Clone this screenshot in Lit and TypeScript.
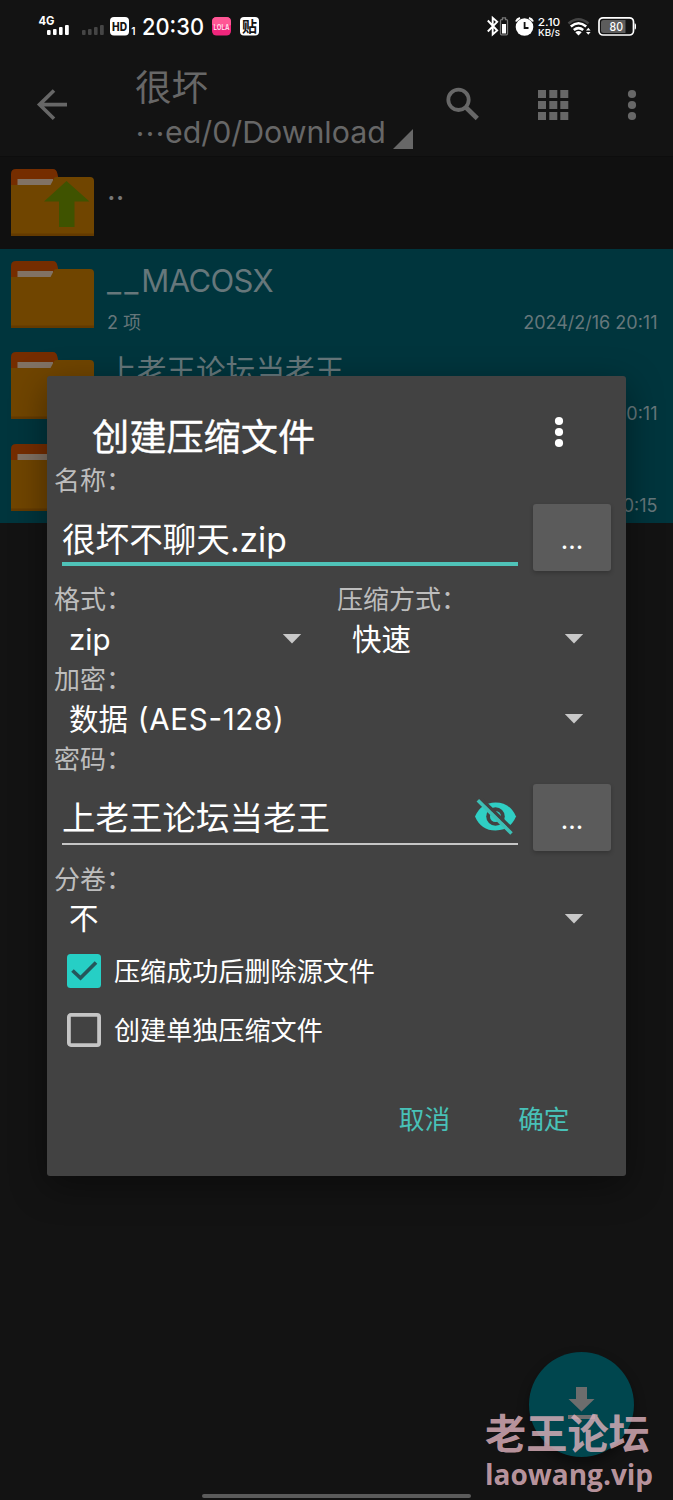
import { LitElement, html, css, svg } from "lit";
import { customElement, property } from "lit/decorators.js";

const kebab = html`<svg class="kebab" width="10" height="32" viewBox="0 0 10 32" fill="currentColor">
  <circle cx="5" cy="5" r="4.1"/><circle cx="5" cy="16" r="4.1"/><circle cx="5" cy="27" r="4.1"/></svg>`;

const caret = html`<svg class="caret" width="20" height="10" viewBox="0 0 20 10"><path d="M.8 0H19.2L10 9.6Z" fill="#c8c8c8"/></svg>`;

const label = (text: string) => html`<div class="label">${text}：</div>`;

@customElement("folder-icon")
export class FolderIcon extends LitElement {
  @property({ type: Boolean }) up = false;
  static styles = css`:host { display: block; width: 84px; height: 68px; flex: none; } svg { display: block; }`;
  render() {
    return html`<svg width="84" height="68" viewBox="0 0 84 68">
      <path d="M0 20V5Q0 0 5 0H42Q45.500 0 46.500 5L48 12V20Z" fill="#752d00"/>
      <path d="M6.500 10H42V16H6.500Z" fill="#817264"/>
      <path d="M0 16H39.500L43.500 8.500Q44 8 46 8H79Q83 8 83 12V67H0Z" fill="#704500"/>
      <path d="M0 64.500H83V67H0Z" fill="#633a00"/>
      ${this.up ? svg`<path d="M55.500 12L78.500 32.500H63.500V58H48V32.500H33Z" fill="#3f5300"/>` : ""}
    </svg>`;
  }
}

@customElement("file-row")
export class FileRow extends LitElement {
  @property() name = "";
  @property() count = "";
  @property() date = "";
  static styles = css`
    :host { display: flex; height: 91.500px; box-sizing: border-box; padding: 12px 15.500px 0 11px; background: #00353d; color: #66777b; }
    .body { flex: 1; margin-left: 12px; display: flex; flex-direction: column; }
    .name { flex: none; height: 40px; line-height: 40px; font-size: 31px; letter-spacing: -.6px; white-space: nowrap; }
    .lead { letter-spacing: 3px; }
    :host([cjk]) .name { font-size: 29.700px; line-height: 37px; letter-spacing: 0; }
    .meta { flex: none; display: flex; justify-content: space-between; height: 39px; line-height: 44px; font-size: 18px; }
  `;
  render() {
    const lead = this.name.match(/^_*/)![0];
    return html`<folder-icon></folder-icon>
      <div class="body"><div class="name"><span class="lead">${lead}</span>${this.name.slice(lead.length)}</div>
      <div class="meta"><span>${this.count}</span><span>${this.date}</span></div></div>`;
  }
}

@customElement("app-root")
export class AppRoot extends LitElement {
  static styles = css`
    :host { display: block; position: relative; width: 673px; height: 1500px; overflow: hidden; background: #131313;
      font-family: Inter, "Noto Sans CJK SC", sans-serif; color: #fff; }
    * { box-sizing: border-box; }
    svg { display: block; flex: none; }
    .status { height: 53px; }
    .header { height: 103px; display: flex; align-items: flex-start; color: #676767; padding-left: 36px; }
    .back { margin-top: 36px; }
    .path { width: 280px; margin-left: 67px; padding-top: 10px; }
    .path .t { font-size: 36.500px; height: 48px; line-height: 50px; margin-left: -1px; }
    .path .s { display: flex; font-size: 30.300px; height: 42px; line-height: 42px; white-space: nowrap; }
    .path .dots { font-family: "Noto Sans CJK SC", sans-serif; font-size: 30px; width: 28px; margin-left: -1px; line-height: 42px; margin-right: 2px; }
    .corner { margin: 18px 0 0 7px; }
    .search { margin: 34px 0 0 30px; }
    .grid { margin: 36px 0 0 57px; }
    .header .kebab { margin: 36px 0 0 58px; }
    .list { background: #101010; border-top: 1px solid #0d0d0d; }
    .parent { height: 91.500px; display: flex; padding: 12px 0 0 11px; color: #777; }
    .parent span { margin-left: 12px; font-size: 30px; line-height: 41px; }

    .dialog { position: absolute; left: 47px; top: 376px; width: 579px; height: 800px; background: #424242; border-radius: 3px;
      box-shadow: 0 10px 36px rgba(0,0,0,.4); padding-top: 34px; }
    .title { height: 54px; display: flex; padding-left: 45px; }
    .title span { width: 462px; font-size: 37.200px; line-height: 56px; -webkit-text-stroke: .35px #fff; }
    .title .kebab { margin-top: 6px; }
    .label { height: 32px; line-height: 34px; font-size: 26px; color: #bdbdbd; padding-left: 7px; white-space: nowrap; }
    .field { display: flex; height: 88px; padding: 8px 0 0 15px; }
    .name-field { height: 87px; }
    .edit { width: 456px; height: 62px; display: flex; justify-content: space-between; font-size: 33.600px; line-height: 71px;
      border-bottom: 4px solid #4fc3b8; white-space: nowrap; }
    .edit.thin { height: 61.500px; border-bottom: 2px solid #c6c6c6; font-size: 33.500px; line-height: 69px; }
    .eye { margin-top: 14.500px; }
    .more { width: 78px; height: 67px; margin-left: 15px; border-radius: 3px; background: #5b5b5b; box-shadow: 0 2px 4px rgba(0,0,0,.22);
      font-size: 26px; line-height: 71px; text-align: center; }
    .pair { display: grid; grid-template-columns: 283px 1fr; }
    .spin { height: 48px; display: flex; justify-content: space-between; padding: 0 42px 0 22px; font-size: 29.500px; line-height: 49px; }
    .spin.first { padding-right: 28px; }
    .spin .caret { margin-top: 18.500px; }
    .latin { letter-spacing: .7px; font-feature-settings: "case"; margin-left: 1.500px; }
    .pw { padding-top: 8.500px; }
    .spin.split { height: 45px; line-height: 46px; }
    .check { height: 60px; display: flex; align-items: center; padding-left: 20px; font-size: 26.100px; }
    .check svg { margin-top: 1px; }
    .check + .check { height: 59px; }
    .check span { margin-left: 13px; line-height: 60px; padding-top: 3px; }
    .actions { display: flex; justify-content: flex-end; gap: 68px; padding-right: 56.500px; font-size: 25.700px; line-height: 122px; color: #48c1b8; }

    .fab { position: absolute; left: 529px; top: 1352px; width: 105px; height: 105px; border-radius: 50%; background: #00464e;
      box-shadow: 0 6px 12px rgba(0,0,0,.4); padding: 35px 0 0 39px; }
    .mark { position: absolute; left: 485px; top: 1407px; color: rgba(220,176,187,.84); white-space: nowrap; font-weight: 700; }
    .mark .zh { font-family: "Noto Sans CJK SC", sans-serif; font-size: 41.200px; height: 52px; line-height: 49px; }
    .mark .en { font-family: "Open Sans", "Noto Sans", sans-serif; font-size: 28px; height: 32px; line-height: 30px; }
    .pill { position: absolute; left: 202px; top: 1494px; width: 269px; height: 4px; border-radius: 2px; background: #5b5b5b; }
  `;

  statusBar() {
    return html`<svg class="status" width="673" height="53" viewBox="0 0 673 53" fill="#fff" font-family="Inter, 'Noto Sans CJK SC', sans-serif">
      <text x="38.500" y="25" font-size="12" font-weight="700" textLength="16" lengthAdjust="spacingAndGlyphs">4G</text>
      <g><rect x="47" y="30" width="3.600" height="5" rx="1"/><rect x="53" y="29" width="3.600" height="6" rx="1"/><rect x="59" y="27" width="3.600" height="8" rx="1"/><rect x="65" y="25" width="3.800" height="10" rx="1"/></g>
      <g fill="#454545"><rect x="82" y="30" width="3.600" height="5" rx="1"/><rect x="88" y="29" width="3.600" height="6" rx="1"/><rect x="94" y="27" width="3.600" height="8" rx="1"/><rect x="100" y="25" width="3.800" height="10" rx="1"/></g>
      <rect x="110" y="17" width="19" height="18.500" rx="4"/>
      <text x="112" y="30.800" font-size="11.500" font-weight="800" fill="#131313" textLength="15" lengthAdjust="spacingAndGlyphs">HD</text>
      <text x="131.300" y="35" font-size="10" font-weight="600">1</text>
      <text x="142" y="34.700" font-size="23.500" font-weight="500" textLength="62" lengthAdjust="spacingAndGlyphs">20:30</text>
      <rect x="212" y="17" width="19" height="18.500" rx="4.500" fill="#f0267c"/>
      <path d="M212 22Q212 17 217 17H226Q231 17 231 22V25Q222 29 212 25Z" fill="#ff5795"/>
      <text x="213.600" y="29.500" font-size="7.500" font-weight="700" fill="#ffd5e4" textLength="16" lengthAdjust="spacingAndGlyphs">LOLA</text>
      <rect x="240" y="17" width="19" height="18.500" rx="4"/>
      <text x="242" y="31.700" font-size="15" font-weight="700" fill="#131313">贴</text>
      <path d="M487.800 20.500L497.200 30.500L492.700 34.500V17.800L497.200 21.800L487.800 31.500" fill="none" stroke="#fff" stroke-width="1.900"/>
      <path d="M502.500 17.800h3v1.800h1q1 0 1 1V33.600q0 1.200-1 1.200h-5q-1 0-1-1.200V20.600q0-1 1-1h1z" fill="#131313" stroke="#777" stroke-width="1.300"/>
      <rect x="502" y="24" width="4" height="9.500"/>
      <circle cx="524.500" cy="27" r="8.800"/><path d="M516 21.500Q517 19 520 18M533 21.500Q532 19 529 18" fill="none" stroke="#fff" stroke-width="2"/>
      <path d="M524.600 22V28H528.500" fill="none" stroke="#131313" stroke-width="1.800"/>
      <text x="537.800" y="25.500" font-size="11" font-weight="500" textLength="22.500" lengthAdjust="spacingAndGlyphs">2.10</text>
      <text x="538" y="35.500" font-size="9.500" font-weight="500" textLength="22" lengthAdjust="spacingAndGlyphs">KB/s</text>
      <g fill="none" stroke-width="2.600"><path d="M568.500 23.500Q578.500 15 588.500 23.500" stroke="#454545"/><path d="M570.800 26.500Q578.500 20 586.200 26.500" stroke="#fff"/><path d="M573.800 30Q578.500 26.300 583.200 30" stroke="#fff"/></g>
      <path d="M575.300 32.200Q578.500 30 581.700 32.200L578.500 35.500Z"/><path d="M586 30.500L588.300 27.700L590.600 30.500ZM586 32L588.300 34.800L590.600 32Z"/>
      <rect x="599" y="17.800" width="34.500" height="17.200" rx="4" fill="none" stroke="#fff" stroke-width="1.700"/>
      <path d="M603.500 20H625.500V33H603.500Q601 33 601 30.500V22.500Q601 20 603.500 20Z" fill="#5c5c5c"/>
      <path d="M634.600 23.200Q636 23.200 636 25V28Q636 29.500 634.600 29.500Z"/>
      <text x="609.500" y="30.600" font-size="11.500" font-weight="500" textLength="13.500" lengthAdjust="spacingAndGlyphs">80</text>
    </svg>`;
  }

  render() {
    return html`
      ${this.statusBar()}
      <div class="header">
        <svg class="back" width="33" height="32" viewBox="0 0 33 32"><path d="M31 15.600H4M18 1.500L3.500 15.600L18 29.800" fill="none" stroke="currentColor" stroke-width="3.600"/></svg>
        <div class="path"><div class="t">很坏</div>
          <div class="s"><span class="dots">…</span><span>ed/0/Download</span><svg class="corner" width="20" height="20" viewBox="0 0 20 20"><path d="M0 20L20 0V20Z" fill="currentColor"/></svg></div></div>
        <svg class="search" width="34" height="34" viewBox="0 0 34 34" fill="none" stroke="currentColor"><circle cx="12.500" cy="12.800" r="10.200" stroke-width="3.800"/><path d="M19.500 20L31.300 31.500" stroke-width="4.600"/></svg>
        <svg class="grid" width="32" height="32" viewBox="0 0 32 32" fill="currentColor"><path d="M1 1h8v8H1zM12.300 1h8v8h-8zM23.300 1h8v8h-8zM1 12h8v8H1zM12.300 12h8v8h-8zM23.300 12h8v8h-8zM1 23h8v8H1zM12.300 23h8v8h-8zM23.300 23h8v8h-8z"/></svg>
        ${kebab}
      </div>
      <div class="list">
        <div class="parent"><folder-icon up></folder-icon><span>..</span></div>
        <file-row name="__MACOSX" count="2 项" date="2024/2/16 20:11"></file-row>
        <file-row cjk name="上老王论坛当老王" date="2024/2/16 20:11"></file-row>
        <file-row date="2024/2/16 20:15"></file-row>
      </div>

      <div class="dialog">
        <div class="title"><span>创建压缩文件</span>${kebab}</div>
        ${label("名称")}
        <div class="field name-field"><div class="edit">很坏不聊天.zip</div><div class="more">...</div></div>
        <div class="pair">
          <div>${label("格式")}<div class="spin first">zip${caret}</div></div>
          <div>${label("压缩方式")}<div class="spin">快速${caret}</div></div>
        </div>
        ${label("加密")}
        <div class="spin"><span>数据 <span class="latin">(AES-128)</span></span>${caret}</div>
        ${label("密码")}
        <div class="field pw"><div class="edit thin"><span>上老王论坛当老王</span>
          <svg class="eye" width="44" height="38" viewBox="0 0 44 38"><path d="M1 18.500Q7 4.500 21.500 4.500T42 18.500Q36 32.500 21.500 32.500T1 18.500Z" fill="#2fcfc4"/><circle cx="21.500" cy="18.500" r="9.300" fill="#424242"/><circle cx="21.500" cy="18.500" r="5.500" fill="#2fcfc4"/><path d="M6.500 .5L41 34" stroke="#424242" stroke-width="3.600"/><path d="M3.800 2.200L37.500 35.500" stroke="#3dbfb5" stroke-width="3.600"/></svg></div>
          <div class="more">...</div></div>
        ${label("分卷")}
        <div class="spin split">不${caret}</div>
        <div class="check"><svg width="34" height="34" viewBox="0 0 34 34"><rect width="34" height="34" rx="3.500" fill="#26cfc5"/><path d="M5.500 16.500L13.500 24L29 8.500" fill="none" stroke="#25565a" stroke-width="3.700"/></svg><span>压缩成功后删除源文件</span></div>
        <div class="check"><svg width="34" height="34" viewBox="0 0 34 34"><rect x="1.900" y="1.900" width="30.200" height="30.200" rx="2" fill="none" stroke="#c5c5c5" stroke-width="3.800"/></svg><span>创建单独压缩文件</span></div>
        <div class="actions"><span>取消</span><span>确定</span></div>
      </div>

      <div class="fab"><svg width="27" height="34" viewBox="0 0 27 34" fill="#6d6d6d"><path d="M8 0H19V12H26.500L13.500 24.500L.5 12H8ZM0 28H27V32H0Z"/></svg></div>
      <div class="mark"><div class="zh">老王论坛</div><div class="en">laowang.vip</div></div>
      <div class="pill"></div>`;
  }
}
